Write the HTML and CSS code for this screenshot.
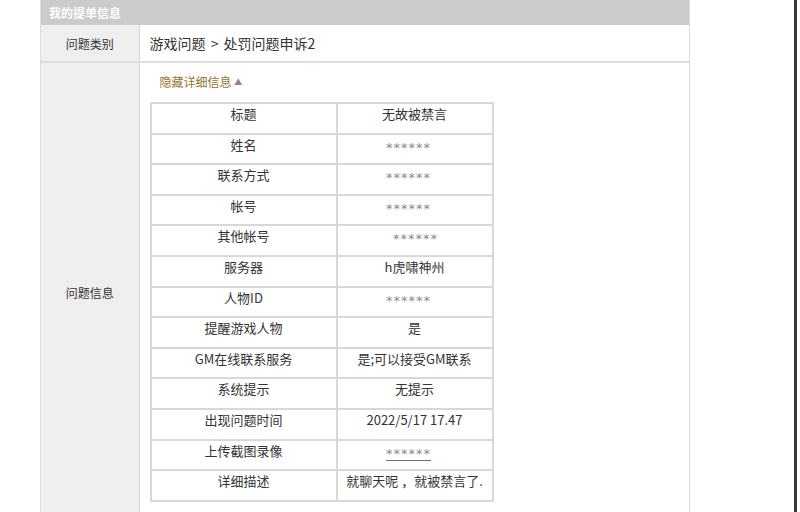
FILE: index.html
```html
<!DOCTYPE html>
<html lang="zh-CN">
<head>
  <meta charset="UTF-8" />
  <title>我的提单信息</title>
  <link rel="stylesheet" href="styles.css">
</head>
<body>
  <div class="screen">
    <div class="panel">
      <div class="panel-head">我的提单信息</div>

      <table class="info">
        <tr class="row-type">
          <th>问题类别</th>
          <td class="path">游戏问题 &gt; 处罚问题申诉2</td>
        </tr>
        <tr class="row-detail">
          <th>问题信息</th>
          <td>
            <a class="toggle" href="#">隐藏详细信息 <span class="arrow">▲</span></a>

            <table class="detail">
              <tr><td>标题</td><td>无故被禁言</td></tr>
              <tr><td>姓名</td><td class="mask">******</td></tr>
              <tr><td>联系方式</td><td class="mask">******</td></tr>
              <tr><td>帐号</td><td class="mask">******</td></tr>
              <tr><td>其他帐号</td><td class="mask shift">******</td></tr>
              <tr><td>服务器</td><td>h虎啸神州</td></tr>
              <tr><td>人物ID</td><td class="mask">******</td></tr>
              <tr><td>提醒游戏人物</td><td>是</td></tr>
              <tr><td>GM在线联系服务</td><td>是;可以接受GM联系</td></tr>
              <tr><td>系统提示</td><td>无提示</td></tr>
              <tr><td>出现问题时间</td><td>2022/5/17 17.47</td></tr>
              <tr><td>上传截图录像</td><td class="mask"><a class="link" href="#">******</a></td></tr>
              <tr><td>详细描述</td><td>就聊天呢 ，就被禁言了.</td></tr>
            </table>
          </td>
        </tr>
      </table>
    </div>
  </div>
</body>
</html>
```

FILE: styles.css
```css
* {
  box-sizing: border-box;
  margin: 0;
  padding: 0;
}

html, body {
  height: 100%;
  overflow: hidden;
}

body {
  background-color: white;
  color: #333;
  font-family: "Noto Sans CJK SC", "DejaVu Sans", sans-serif;
  font-size: 13px;
}

.screen {
  width: 797px;
  height: 100%;
  padding-left: 40px;
  border-right: 3px solid #38383c;
}

.panel {
  width: 650px;
  border-left: 1px solid #dcdcdc;
  border-right: 1px solid #dcdcdc;
}

.panel-head {
  height: 25px;
  line-height: 25px;
  padding-left: 8px;
  background-color: #cbcbcb;
  color: white;
  font-weight: bold;
  font-size: 12px;
}

.info {
  width: 100%;
  border-collapse: collapse;
}

.info > tbody > tr > th,
.info > tbody > tr > td {
  border-bottom: 2px solid #dedede;
}

.info > tbody > tr > th {
  width: 98px;
  background-color: #efefef;
  border-right: 1px solid #d6d6d6;
  font-weight: normal;
  font-size: 12px;
  text-align: center;
}

.row-type th,
.row-type td {
  height: 37px;
}

.path {
  padding-left: 10px;
  font-size: 14px;
  word-spacing: 2px;
}

.row-detail th,
.row-detail td {
  height: 460px;
  vertical-align: top;
}

.row-detail th {
  padding-top: 221px;
}

.row-detail > td {
  padding: 10px 0 0 10px;
}

.toggle {
  display: block;
  height: 29px;
  padding-left: 10px;
  color: #94752c;
  font-size: 12px;
  text-decoration: none;
}

.arrow {
  color: #888;
  font-size: 8px;
  vertical-align: 2px;
}

.detail {
  width: 344px;
  border-collapse: collapse;
}

.detail td {
  height: 30.6px;
  border: 2px solid #d8d8d8;
  text-align: center;
}

.detail td:first-child {
  width: 186px;
}

.detail td.mask {
  padding: 5px 12px 0 0;
  color: #8a8a8a;
  font-family: "DejaVu Sans", sans-serif;
  font-size: 13px;
  letter-spacing: 1px;
}

.detail td.shift {
  padding-right: 0;
  padding-left: 2px;
}

.link {
  display: inline-block;
  line-height: 12px;
  padding-top: 2px;
  color: #8a8a8a;
  text-decoration: none;
  border-bottom: 1px solid #6f7d55;
}
```
